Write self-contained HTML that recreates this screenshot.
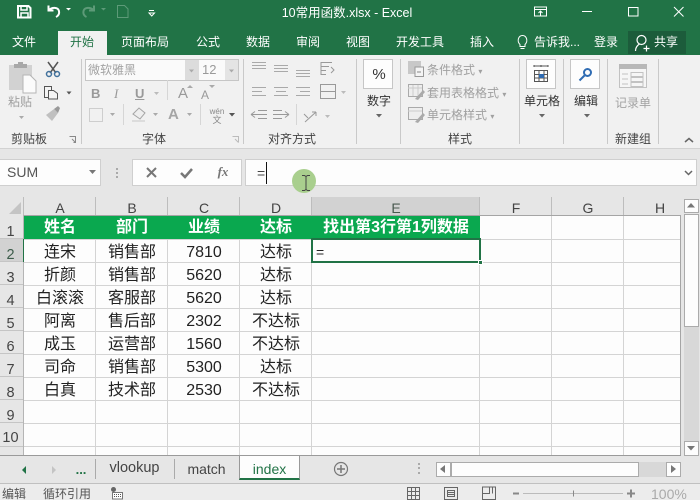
<!DOCTYPE html>
<html><head><meta charset="utf-8">
<style>
*{box-sizing:border-box}
html,body{margin:0;padding:0;width:700px;height:500px;overflow:hidden;background:#e6e6e6}
body{position:relative;font-family:"Liberation Sans","Microsoft YaHei","Noto Sans CJK SC",sans-serif;}
.a,.t{position:absolute}
.t{white-space:nowrap;line-height:1;transform:translateX(-50%)}
.l{position:absolute;white-space:nowrap;line-height:1}
.tab{color:#fff;font-size:12px;top:36px}
.g{color:#a0a0a0;font-size:12px}
.d{color:#444;font-size:12px}
.sep{position:absolute;width:1px;background:#c9c9c9}
.c{position:absolute;font-size:16px;line-height:1;color:#222;transform:translate(-50%,1px);white-space:nowrap}
.rh{position:absolute;left:-1px;width:23px;text-align:center;font-size:14.500px;color:#444;line-height:1}
.ch{position:absolute;top:208px;font-size:14px;line-height:1;color:#444;transform:translate(-50%,-50%)}
.h{position:absolute;background:#d4d4d4;left:24px;width:656px;height:1px}
.v{position:absolute;background:#d4d4d4;top:216px;height:239px;width:1px}
svg{position:absolute;overflow:visible}
</style></head><body>
<!-- title bar -->
<div class="a" style="left:0;top:0;width:700px;height:55px;background:#217346"></div>
<svg style="left:0;top:0" width="200" height="30" fill="none" stroke="#fff">
<path d="M18 6h10.500l2 2v9.500H18z" stroke-width="2"/><path d="M21 6v4h6V6M21 18v-5h7v5" stroke-width="1.500"/>
<path d="M48.500 5.500v5h5M49 10c3-3 9-3 10 1 .6 3-1 5-3 6" stroke-width="2"/><path d="M66 8h5l-2.500 2.500z" fill="#fff" stroke="none"/>
<path d="M94 5.500v5h-5M93.500 10c-3-3-9-3-10 1-.6 3 1 5 3 6" stroke="#5d9a78" stroke-width="2"/><path d="M101 8h5l-2.500 2.500z" fill="#5d9a78" stroke="none"/>
<path d="M117.500 5.500h7l3.500 3.500v8.500h-10.500z" stroke="#5d9a78"/>
<path d="M149 10.500h5M149 13h5.500l-2.750 3z" stroke="#fff"/>
</svg>
<div class="t" style="left:347px;top:7px;color:#fff;font-size:12.500px">10常用函数.xlsx - Excel</div>
<svg style="left:530px;top:0" width="170" height="25" fill="none" stroke="#fff">
<path d="M4.500 7h12v9h-12zM4.500 9.500h12M10.500 15.500v-4M8.500 13l2-2 2 2"/>
<path d="M52 11.500h10"/><path d="M98.500 7.500h9.500v8.500h-9.500z"/><path d="M144 7l9.500 9.500M153.500 7l-9.500 9.500"/>
</svg>
<div class="l tab" style="left:12px">文件</div>
<div class="a" style="left:58px;top:31px;width:49px;height:24px;background:#f1f1f1"></div>
<div class="t tab" style="left:82px;color:#217346">开始</div>
<div class="t tab" style="left:145px">页面布局</div>
<div class="t tab" style="left:208px">公式</div>
<div class="t tab" style="left:258px">数据</div>
<div class="t tab" style="left:308px">审阅</div>
<div class="t tab" style="left:358px">视图</div>
<div class="t tab" style="left:420px">开发工具</div>
<div class="t tab" style="left:482px">插入</div>
<svg style="left:516px;top:34px" width="14" height="16" fill="none" stroke="#fff"><path d="M4 10.500C0.500 7 2.500 1.500 6.500 1.500s6 5.500 2.500 9v2H4zM4.500 14.500h4"/></svg>
<div class="t tab" style="left:557px">告诉我...</div>
<div class="t tab" style="left:606px">登录</div>
<div class="a" style="left:628px;top:31px;width:58px;height:23px;background:#1c5c3b"></div>
<svg style="left:634px;top:34px" width="18" height="18" fill="none" stroke="#fff" stroke-width="1.200"><circle cx="7.500" cy="6" r="4.500"/><path d="M5.500 10C3 11.500 1.500 14 1.500 17M9.500 14.500h6M12.500 11.500v6"/></svg>
<div class="l tab" style="left:654px;top:36px">共享</div>

<!-- ribbon -->
<div class="a" style="left:0;top:55px;width:700px;height:93px;background:#f1f1f1"></div>
<div class="a" style="left:0;top:148px;width:700px;height:1px;background:#d2d2d2"></div>
<!-- clipboard -->
<svg style="left:0;top:55px" width="80" height="70" fill="none">
<path d="M9 10h23v25H9z" fill="#d2d2d2"/><path d="M14 9h13v4H14zM18 7h5v3h-5z" fill="#a8a8a8"/>
<path d="M23 20h7l6 6v12H23z" fill="#fbfbfb" stroke="#b5b5b5"/>
<path d="M48 7l8 11M58 7l-8 11" stroke="#555" stroke-width="1.500"/><circle cx="49" cy="19" r="2.500" stroke="#41719c" stroke-width="1.500"/><circle cx="57" cy="19" r="2.500" stroke="#41719c" stroke-width="1.500"/>
<path d="M44.500 31.500h7v11h-7z" fill="#f4f4f4" stroke="#555"/><path d="M48.500 35.500h5l4 3v5.500h-9z" fill="#f4f4f4" stroke="#555"/>
<path d="M66.500 36.500h5l-2.500 3z" fill="#555"/>
<path d="M19 61h5l-2.500 3z" fill="#aaa"/>
<path d="M46 60l8-6 4 4-6 8z" fill="#c0c0c0"/><path d="M54 54l4-3 2 2-2 5z" fill="#999"/>
</svg>
<div class="t g" style="left:20px;top:96px">粘贴</div>
<div class="t d" style="left:29px;top:133px">剪贴板</div>
<div class="sep" style="left:81px;top:59px;height:85px"></div>
<!-- font -->
<div class="a" style="left:85px;top:59px;width:154px;height:22px;background:#fafafa;border:1px solid #c6c6c6"></div>
<div class="a" style="left:185px;top:60px;width:14px;height:20px;background:#dcdcdc"></div>
<div class="a" style="left:225px;top:60px;width:13px;height:20px;background:#e4e4e4"></div>
<div class="l g" style="left:88px;top:64px;color:#a3a3a3">微软雅黑</div>
<div class="l g" style="left:202px;top:63px;font-size:13px;color:#9a9a9a">12</div>
<svg style="left:85px;top:59px" width="160" height="90" fill="none">
<path d="M104 10.500h5l-2.500 3zM144 10.500h5l-2.500 3z" fill="#aaa"/>
<path d="M82.500 21v20M38.500 45v21M115.500 45v21" stroke="#d6d6d6"/>
<path d="M4.500 49.500h13v13h-13z" stroke="#aaa" stroke-dasharray="1 1"/>
<path d="M25 54h5l-2.500 3zM68 54h5l-2.500 3zM102 54h5l-2.500 3zM145 54h5l-2.500 3z" fill="#aaa"/>
<path d="M69 33h5l-2.500 3z" fill="#bbb"/>
<path d="M48 55l6-6 6 5-5 6z" stroke="#a5a5a5" fill="#eee"/><path d="M47 62h13" stroke="#dcdcdc" stroke-width="2"/>
</svg>
<div class="l" style="left:91px;top:87px;font-size:13px;font-weight:bold;color:#999">B</div>
<div class="l" style="left:114px;top:87px;font-size:13px;font-style:italic;font-family:'Liberation Serif',serif;color:#999">I</div>
<div class="l" style="left:135px;top:87px;font-size:13px;font-weight:bold;color:#999;text-decoration:underline">U</div>
<svg style="left:185px;top:84px" width="30" height="10"><path d="M2 4l3-3 3 3z" fill="#aaa"/><path d="M24 1h6l-3 3z" fill="#aaa"/></svg>
<div class="l" style="left:178px;top:86px;font-size:15px;color:#999">A</div>
<div class="l" style="left:201px;top:89px;font-size:12px;color:#999">A</div>
<div class="l" style="left:168px;top:107px;font-size:15px;font-weight:bold;color:#a5a5a5">A</div>
<svg style="left:229px;top:113px" width="8" height="6"><path d="M0 0h6l-3 3.500z" fill="#555"/></svg>
<div class="t" style="left:217px;top:108px;font-size:8px;color:#888">wén</div>
<div class="t" style="left:217px;top:116px;font-size:9px;color:#888">文</div>
<div class="t d" style="left:154px;top:133px">字体</div>
<svg style="left:69px;top:136px" width="180" height="10" fill="none" stroke="#888"><path d="M.5.500h6v6M3 3l3.500 3.500M4.500 6.500h2v-2"/><path d="M163.500.5h6v6M166 3l3.500 3.500" stroke="#bbb"/></svg>
<div class="sep" style="left:243px;top:59px;height:85px"></div>
<!-- align -->
<svg style="left:250px;top:59px" width="105" height="72" fill="none" stroke="#a9a9a9">
<path d="M2 3.500h14M2 6.500h14M2 9.500h14M24 6.500h14M24 9.500h14M24 12.500h14M46 11.500h14M46 14.500h14M46 17.500h14"/>
<path d="M71 3.500h11M71 7.500h8M71 11.500h5M71 15.500h5M71 3v13M81 8l3 3-3 3" stroke="#999"/>
<path d="M2 28.500h14M2 32.500h10M2 36.500h14M24 28.500h14M26 32.500h10M24 36.500h14M46 28.500h14M50 32.500h10M46 36.500h14"/>
<path d="M70.500 25.500h15v14h-15zM71 32.500h14M74 32.500h8" stroke="#999"/>
<path d="M91 32h5l-2.500 3z" fill="#bbb" stroke="none"/>
<path d="M1 55.500h16M8 51.500h9M8 59.500h9M1 55.500l4-3M1 55.500l4 3" stroke="#999"/>
<path d="M23 51.500h9M23 59.500h9M23 55.500h16M39 55.500l-4-3M39 55.500l-4 3" stroke="#999"/>
<path d="M46.500 45v21" stroke="#d6d6d6"/>
<path d="M55 63l11-10M66 53h-4M66 53v4M54 55l4 4" stroke="#999"/><path d="M75 56h5l-2.500 3z" fill="#bbb" stroke="none"/>
</svg>
<div class="t d" style="left:292px;top:133px">对齐方式</div>
<div class="sep" style="left:356px;top:59px;height:85px"></div>
<!-- number -->
<div class="a" style="left:363px;top:59px;width:30px;height:30px;background:#fdfdfd;border:1px solid #c6c6c6"></div>
<div class="t" style="left:379px;top:67px;font-size:15px;color:#333">%</div>
<div class="t d" style="left:379px;top:95px;color:#333">数字</div>
<svg style="left:376px;top:114px" width="8" height="6"><path d="M0 0h6l-3 3.500z" fill="#666"/></svg>
<div class="sep" style="left:400px;top:59px;height:85px"></div>
<!-- styles -->
<svg style="left:407px;top:60px" width="22" height="66" fill="none">
<path d="M1 1h13v13H1z" fill="#c8c8c8"/><path d="M8 7h8.500v9.500H8z" fill="#f4f4f4" stroke="#999"/><path d="M10 12h4" stroke="#888"/>
<path d="M1.500 24.500h14v12h-14z" fill="#eee" stroke="#aaa"/><path d="M1 28h14M6 25v11M11 25v11" stroke="#ccc"/><path d="M8 39l8-9 2 2-7 8z" fill="#aaa"/>
<path d="M1.500 47.500h14v12h-14z" fill="#eee" stroke="#aaa"/><path d="M1 51h14" stroke="#ccc"/><path d="M8 62l8-9 2 2-7 8z" fill="#aaa"/>
</svg>
<div class="l g" style="left:427px;top:64px">条件格式 <span style="font-size:8px">▾</span></div>
<div class="l g" style="left:427px;top:87px">套用表格格式 <span style="font-size:8px">▾</span></div>
<div class="l g" style="left:427px;top:109px">单元格样式 <span style="font-size:8px">▾</span></div>
<div class="t d" style="left:460px;top:133px">样式</div>
<div class="sep" style="left:519px;top:59px;height:85px"></div>
<!-- cells -->
<div class="a" style="left:526px;top:59px;width:30px;height:30px;background:#fdfdfd;border:1px solid #c6c6c6"></div>
<svg style="left:533px;top:65px" width="17" height="18" fill="none" stroke="#555"><path d="M1 1h14M1 0v2M8 0v2M15 0v2"/><path d="M1.500 5.500h13v11h-13zM1 9.500h14M1 13h14M6 5.500v11M11 5.500v11"/><path d="M6 9h5v4H6z" fill="#2f6cb3" stroke="none"/></svg>
<div class="t d" style="left:542px;top:95px;color:#333">单元格</div>
<svg style="left:539px;top:114px" width="8" height="6"><path d="M0 0h6l-3 3.500z" fill="#666"/></svg>
<div class="sep" style="left:563px;top:59px;height:85px"></div>
<!-- edit -->
<div class="a" style="left:570px;top:59px;width:30px;height:30px;background:#fdfdfd;border:1px solid #c6c6c6"></div>
<svg style="left:578px;top:67px" width="16" height="16" fill="none" stroke="#2f6cb3" stroke-width="2"><circle cx="9.500" cy="5.500" r="3.500"/><path d="M6.500 8.500L1.500 13.500"/></svg>
<div class="t d" style="left:586px;top:95px;color:#333">编辑</div>
<svg style="left:584px;top:114px" width="8" height="6"><path d="M0 0h6l-3 3.500z" fill="#666"/></svg>
<div class="sep" style="left:607px;top:59px;height:85px"></div>
<!-- form -->
<svg style="left:619px;top:64px" width="30" height="26" fill="none" stroke="#c2c2c2"><path d="M.5.500h27v23H.5z" fill="#f6f6f6"/><path d="M0 0h28v5H0z" fill="#b8b8b8" stroke="none"/><path d="M3 10h6M3 15h6M3 20h6M12 8.500h12v4H12zM12 13.500h12v4H12zM12 18.500h12v4H12z"/></svg>
<div class="t g" style="left:633px;top:97px;color:#a3a3a3">记录单</div>
<div class="t d" style="left:633px;top:133px">新建组</div>
<div class="sep" style="left:658px;top:59px;height:85px"></div>
<svg style="left:684px;top:137px" width="10" height="7" fill="none" stroke="#666" stroke-width="1.500"><path d="M1 5l4-3.500L9 5"/></svg>

<!-- formula bar -->
<div class="a" style="left:0;top:149px;width:700px;height:48px;background:#e6e6e6"></div>
<div class="a" style="left:0;top:159px;width:101px;height:27px;background:#fdfdfd;border:1px solid #cfcfcf;border-left:0"></div>
<div class="l" style="left:7px;top:165px;font-size:14px;color:#555">SUM</div>
<svg style="left:89px;top:170px" width="8" height="6"><path d="M0 0h7l-3.500 4z" fill="#777"/></svg>
<svg style="left:116px;top:167px" width="4" height="14"><path d="M0 1h2v2H0zM0 5h2v2H0zM0 9h2v2H0z" fill="#aaa"/></svg>
<div class="a" style="left:132px;top:159px;width:110px;height:27px;background:#fdfdfd;border:1px solid #cfcfcf"></div>
<svg style="left:146px;top:167px" width="55" height="14" fill="none" stroke="#777" stroke-width="2"><path d="M1 1l9 9M10 1L1 10"/><path d="M35 6l4 4 7-8" stroke-width="2.500"/></svg>
<div class="t" style="left:223px;top:165px;font-size:13px;font-style:italic;font-weight:bold;font-family:'Liberation Serif',serif;color:#777">fx</div>
<div class="a" style="left:245px;top:159px;width:452px;height:27px;background:#fdfdfd;border:1px solid #cfcfcf"></div>
<div class="l" style="left:257px;top:166px;font-size:14px;color:#444">=</div>
<div class="a" style="left:266px;top:162px;width:1px;height:22px;background:#111"></div>
<svg style="left:684px;top:170px" width="10" height="7" fill="none" stroke="#666" stroke-width="1.500"><path d="M1 1l3.500 3.500L8 1"/></svg>
<div class="a" style="left:292px;top:169px;width:24px;height:24px;border-radius:50%;background:#a9cf8e"></div>
<svg style="left:300px;top:175px" width="12" height="17" fill="none" stroke="#444"><path d="M2 .500h2.500l1.500 1 1.500-1H10M6 1.500v13M2 15.500h2.500L6 14.500l1.500 1H10"/></svg>

<!-- column headers -->
<div class="a" style="left:0;top:197px;width:680px;height:19px;background:#e6e6e6"></div>
<div class="a" style="left:312px;top:197px;width:168px;height:18px;background:#d2d2d2"></div>
<svg style="left:8px;top:201px" width="14" height="14"><path d="M13 1v12H1z" fill="#c4c4c4"/></svg>
<div class="sep" style="left:23px;top:197px;height:19px;background:#bdbdbd"></div>
<div class="sep" style="left:95px;top:197px;height:19px;background:#bdbdbd"></div>
<div class="sep" style="left:167px;top:197px;height:19px;background:#bdbdbd"></div>
<div class="sep" style="left:239px;top:197px;height:19px;background:#bdbdbd"></div>
<div class="sep" style="left:311px;top:197px;height:19px;background:#bdbdbd"></div>
<div class="sep" style="left:479px;top:197px;height:19px;background:#bdbdbd"></div>
<div class="sep" style="left:551px;top:197px;height:19px;background:#bdbdbd"></div>
<div class="sep" style="left:623px;top:197px;height:19px;background:#bdbdbd"></div>
<div class="ch" style="left:60px">A</div><div class="ch" style="left:132px">B</div><div class="ch" style="left:204px">C</div><div class="ch" style="left:276px">D</div><div class="ch" style="left:396px;color:#4a5a50">E</div><div class="ch" style="left:516px">F</div><div class="ch" style="left:588px">G</div><div class="ch" style="left:660px">H</div>

<!-- sheet -->
<div class="a" style="left:24px;top:215px;width:657px;height:241px;background:#fdfdfd"></div>
<div class="a" style="left:680px;top:215px;width:1px;height:241px;background:#a5a5a5"></div>
<div class="a" style="left:24px;top:215px;width:657px;height:1px;background:#a5a5a5"></div>
<div class="a" style="left:0;top:215px;width:24px;height:241px;background:#e6e6e6"></div>
<div class="a" style="left:0;top:239px;width:23px;height:23px;background:#d2d2d2"></div>
<div class="a" style="left:23px;top:215px;width:1px;height:241px;background:#b5b5b5"></div>
<div class="h" style="top:239px"></div><div class="h" style="top:262px"></div><div class="h" style="top:285px"></div><div class="h" style="top:308px"></div><div class="h" style="top:331px"></div><div class="h" style="top:354px"></div><div class="h" style="top:377px"></div><div class="h" style="top:400px"></div><div class="h" style="top:423px"></div><div class="h" style="top:446px"></div>
<div class="v" style="left:95px"></div><div class="v" style="left:167px"></div><div class="v" style="left:239px"></div><div class="v" style="left:311px"></div><div class="v" style="left:479px"></div><div class="v" style="left:551px"></div><div class="v" style="left:623px"></div>
<div class="a" style="left:0;top:455px;width:681px;height:1px;background:#9a9a9a"></div>
<!-- row heads -->
<div class="a" style="left:0;top:238px;width:23px;height:1px;background:#c5c5c5"></div>
<div class="a" style="left:0;top:261px;width:23px;height:1px;background:#c5c5c5"></div>
<div class="a" style="left:0;top:284px;width:23px;height:1px;background:#c5c5c5"></div>
<div class="a" style="left:0;top:307px;width:23px;height:1px;background:#c5c5c5"></div>
<div class="a" style="left:0;top:330px;width:23px;height:1px;background:#c5c5c5"></div>
<div class="a" style="left:0;top:353px;width:23px;height:1px;background:#c5c5c5"></div>
<div class="a" style="left:0;top:376px;width:23px;height:1px;background:#c5c5c5"></div>
<div class="a" style="left:0;top:399px;width:23px;height:1px;background:#c5c5c5"></div>
<div class="a" style="left:0;top:422px;width:23px;height:1px;background:#c5c5c5"></div>
<div class="a" style="left:0;top:446px;width:23px;height:1px;background:#c5c5c5"></div>
<div class="rh" style="top:225px">1</div><div class="rh" style="top:248px;color:#3c5c4a">2</div><div class="rh" style="top:271px">3</div><div class="rh" style="top:294px">4</div><div class="rh" style="top:317px">5</div><div class="rh" style="top:340px">6</div><div class="rh" style="top:363px">7</div><div class="rh" style="top:386px">8</div><div class="rh" style="top:409px">9</div><div class="rh" style="top:431px">10</div>
<!-- green header row -->
<div class="a" style="left:24px;top:216px;width:456px;height:23px;background:#0aa84f"></div>
<div class="c" style="left:60px;top:219px;color:#fff;font-weight:bold">姓名</div>
<div class="c" style="left:132px;top:219px;color:#fff;font-weight:bold">部门</div>
<div class="c" style="left:204px;top:219px;color:#fff;font-weight:bold">业绩</div>
<div class="c" style="left:276px;top:219px;color:#fff;font-weight:bold">达标</div>
<div class="c" style="left:396px;top:219px;color:#fff;font-weight:bold">找出第3行第1列数据</div>
<!-- data -->
<div class="c" style="left:60px;top:244px">连宋</div><div class="c" style="left:132px;top:244px">销售部</div><div class="c" style="left:204px;top:244px">7810</div><div class="c" style="left:276px;top:244px">达标</div>
<div class="c" style="left:60px;top:267px">折颜</div><div class="c" style="left:132px;top:267px">销售部</div><div class="c" style="left:204px;top:267px">5620</div><div class="c" style="left:276px;top:267px">达标</div>
<div class="c" style="left:60px;top:290px">白滚滚</div><div class="c" style="left:132px;top:290px">客服部</div><div class="c" style="left:204px;top:290px">5620</div><div class="c" style="left:276px;top:290px">达标</div>
<div class="c" style="left:60px;top:313px">阿离</div><div class="c" style="left:132px;top:313px">售后部</div><div class="c" style="left:204px;top:313px">2302</div><div class="c" style="left:276px;top:313px">不达标</div>
<div class="c" style="left:60px;top:336px">成玉</div><div class="c" style="left:132px;top:336px">运营部</div><div class="c" style="left:204px;top:336px">1560</div><div class="c" style="left:276px;top:336px">不达标</div>
<div class="c" style="left:60px;top:359px">司命</div><div class="c" style="left:132px;top:359px">销售部</div><div class="c" style="left:204px;top:359px">5300</div><div class="c" style="left:276px;top:359px">达标</div>
<div class="c" style="left:60px;top:382px">白真</div><div class="c" style="left:132px;top:382px">技术部</div><div class="c" style="left:204px;top:382px">2530</div><div class="c" style="left:276px;top:382px">不达标</div>
<!-- selection -->
<div class="a" style="left:311px;top:238px;width:170px;height:25px;border:2px solid #217346"></div>
<div class="a" style="left:478px;top:260px;width:5px;height:5px;background:#217346;border:1px solid #fff"></div>
<div class="l" style="left:316px;top:245px;font-size:14px;color:#222">=</div>
<div class="a" style="left:23px;top:239px;width:1px;height:23px;background:#217346"></div>

<!-- vscroll -->
<div class="a" style="left:681px;top:197px;width:19px;height:259px;background:#e6e6e6"></div>
<div class="a" style="left:684px;top:199px;width:15px;height:14px;background:#fdfdfd;border:1px solid #ababab"></div>
<svg style="left:687px;top:203px" width="9" height="6"><path d="M0 4.500h8L4 0z" fill="#777"/></svg>
<div class="a" style="left:684px;top:214px;width:15px;height:113px;background:#fdfdfd;border:1px solid #ababab"></div>
<div class="a" style="left:684px;top:327px;width:15px;height:115px;background:#d8d8d8"></div>
<div class="a" style="left:684px;top:441px;width:15px;height:15px;background:#fdfdfd;border:1px solid #ababab"></div>
<svg style="left:687px;top:446px" width="9" height="6"><path d="M0 0h8L4 4.500z" fill="#777"/></svg>

<!-- tab bar -->
<div class="a" style="left:0;top:456px;width:700px;height:27px;background:#e6e6e6"></div>
<div class="a" style="left:0;top:483px;width:700px;height:1px;background:#c0c0c0"></div>
<svg style="left:20px;top:464px" width="40" height="12"><path d="M6 2v8L2 6z" fill="#217346"/><path d="M32 2v8l4-4z" fill="#c4c4c4"/></svg>
<div class="t" style="left:81px;top:463px;font-size:13px;font-weight:bold;color:#217346">...</div>
<div class="sep" style="left:95px;top:459px;height:20px;background:#aaa"></div>
<div class="t" style="left:134.500px;top:461px;font-size:14.500px;color:#444">vlookup</div>
<div class="sep" style="left:174px;top:459px;height:20px;background:#aaa"></div>
<div class="t" style="left:206.500px;top:462px;font-size:14px;color:#444">match</div>
<div class="a" style="left:239px;top:456px;width:61px;height:24px;background:#fdfdfd;border-left:1px solid #999;border-right:1px solid #999;border-bottom:2px solid #217346"></div>
<div class="t" style="left:269.500px;top:462px;font-size:14px;color:#217346">index</div>
<svg style="left:333px;top:461px" width="16" height="16" fill="none" stroke="#777"><circle cx="8" cy="8" r="6.500" stroke-width="1.200"/><path d="M4 8h8M8 4v8" stroke-width="1.500"/></svg>
<svg style="left:418px;top:463px" width="4" height="14"><path d="M0 0h2v2H0zM0 4h2v2H0zM0 9h2v2H0z" fill="#aaa"/></svg>
<div class="a" style="left:436px;top:462px;width:15px;height:15px;background:#fdfdfd;border:1px solid #ababab"></div>
<svg style="left:440px;top:465px" width="7" height="10"><path d="M5 0v8L0 4z" fill="#777"/></svg>
<div class="a" style="left:451px;top:462px;width:188px;height:15px;background:#fdfdfd;border:1px solid #ababab"></div>
<div class="a" style="left:639px;top:462px;width:28px;height:15px;background:#d8d8d8"></div>
<div class="a" style="left:666px;top:462px;width:15px;height:15px;background:#fdfdfd;border:1px solid #ababab"></div>
<svg style="left:671px;top:465px" width="7" height="10"><path d="M0 0v8l5-4z" fill="#777"/></svg>

<!-- status bar -->
<div class="a" style="left:0;top:484px;width:700px;height:16px;background:#ececec"></div>
<div class="l" style="left:2px;top:488px;font-size:12px;color:#555">编辑</div>
<div class="l" style="left:43px;top:488px;font-size:12px;color:#555">循环引用</div>
<svg style="left:110px;top:486px" width="14" height="14" fill="none"><circle cx="3.500" cy="3.500" r="2.500" fill="#666"/><path d="M2.500 6.500h10v6.500h-10z" fill="#fff" stroke="#777"/><path d="M4 8.500h7M4 10.500h7" stroke="#555" stroke-dasharray="1 1"/></svg>
<svg style="left:405px;top:487px" width="295" height="14" fill="none" stroke="#666">
<path d="M2.500.5h12v12h-12zM6.500.5v12M10.500.5v12M2.500 4.500h12M2.500 8.500h12"/>
<path d="M39.500.5h13v12h-13zM42.500 3.500h7v6h-7zM43 5.500h6M43 7.500h6"/>
<path d="M77.500 0v12.500h13V0zM77.500 6.500h7V0M87.500 0v6.500"/>
<path d="M108 6.500h6" stroke="#888" stroke-width="2"/>
<path d="M118 6.500h100" stroke="#bbb"/><path d="M168.500 3.500v6" stroke="#888"/>
<path d="M222 6.500h8M226 2.500v8" stroke="#888" stroke-width="2"/>
</svg>
<div class="l" style="left:651px;top:487px;font-size:14px;color:#aaa">100%</div>
</body></html>
